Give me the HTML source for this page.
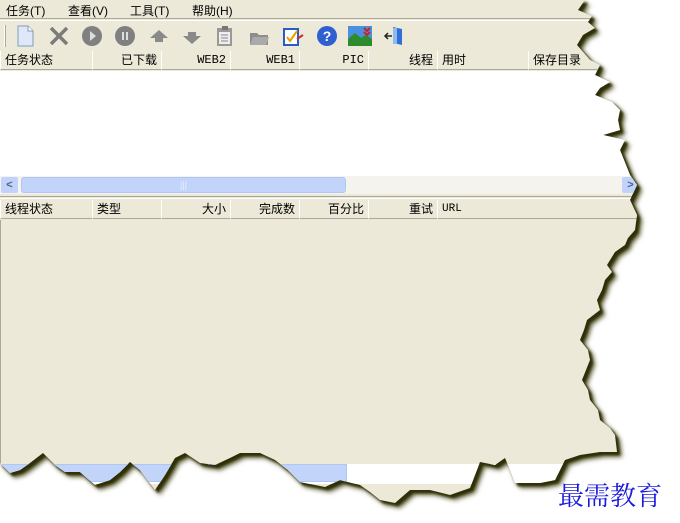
<!DOCTYPE html>
<html><head><meta charset="utf-8"><style>
*{margin:0;padding:0;box-sizing:border-box}
body{width:680px;height:523px;background:#fff;position:relative;overflow:hidden;font-family:"Liberation Sans","Noto Sans CJK SC","WenQuanYi Zen Hei",sans-serif;font-size:12px;color:#000}
#wrap{position:absolute;left:0;top:0;width:680px;height:523px;filter:drop-shadow(3px 3px 1px #2e2e08) drop-shadow(2px 2px 2px #55552a)}
#pg{position:absolute;left:0;top:0;width:680px;height:523px;background:#ece9d8;
clip-path:polygon(0 0,585px 0,578px 10px,592px 16px,588px 22px,595px 28px,583px 35px,577px 45px,590px 60px,600px 65px,595px 75px,610px 82px,600px 88px,595px 95px,612px 102px,620px 110px,618px 120px,620px 130px,603px 135px,625px 140px,620px 150px,624px 160px,630px 175px,637px 185px,630px 200px,637px 215px,635px 230px,628px 238px,625px 245px,615px 252px,607px 265px,612px 272px,605px 280px,602px 290px,597px 300px,600px 310px,587px 320px,584px 330px,580px 340px,588px 350px,590px 360px,582px 380px,588px 390px,590px 400px,598px 410px,600px 420px,610px 428px,615px 435px,617px 452px,600px 452px,580px 455px,565px 460px,560px 470px,555px 480px,540px 483px,515px 483px,510px 470px,505px 458px,495px 465px,480px 462px,475px 475px,470px 488px,450px 495px,430px 490px,410px 490px,395px 503px,380px 500px,370px 492px,360px 485px,340px 480px,325px 487px,300px 482px,288px 470px,275px 460px,260px 453px,240px 453px,230px 458px,215px 465px,200px 463px,185px 453px,175px 458px,165px 475px,155px 490px,140px 470px,130px 462px,120px 472px,110px 480px,95px 485px,80px 472px,65px 472px,55px 465px,43px 453px,30px 463px,20px 470px,10px 473px,0 463px)}
.menu{position:absolute;top:0;left:0;height:19px;width:680px;border-bottom:1px solid #aca899}
.menu span{position:absolute;top:2px;font-size:12px}
.tb{position:absolute;top:20px;left:0;width:680px;height:30px;border-top:1px solid #fff}
.ic{position:absolute;top:4px;width:22px;height:22px}
.hdr{position:absolute;left:0;width:680px;height:20px;background:#ece9d8}
.hdr div{position:absolute;top:0;height:19px;line-height:15px;border-right:1px solid #aca899;border-left:1px solid #fff;border-bottom:1px solid #aca899;padding:2px 4px;white-space:nowrap;font-size:12px}
.r{text-align:right}
.sb{position:absolute;left:0;width:680px;height:18px;background:#f4f3ee}
</style></head><body>
<div id="wrap"><div id="pg">
<div class="menu"><span style="left:6px">任务(T)</span><span style="left:68px">查看(V)</span><span style="left:130px">工具(T)</span><span style="left:192px">帮助(H)</span></div>
<div class="tb">
<div style="position:absolute;left:4px;top:4px;width:2px;height:22px;border-left:1px solid #fff;border-right:1px solid #aca899"></div>
<svg class="ic" style="left:14px" viewBox="0 0 22 22"><path d="M4 1h10l5 5v15H4z" fill="#dfe8f8" stroke="#7f9db9"/><path d="M14 1v5h5" fill="#fff" stroke="#7f9db9"/></svg>
<svg class="ic" style="left:48px" viewBox="0 0 22 22"><path d="M3 3l16 16M19 3L3 19" stroke="#7b7b7b" stroke-width="3.5"/></svg>
<svg class="ic" style="left:81px" viewBox="0 0 22 22"><circle cx="11" cy="11" r="10" fill="#808080"/><path d="M9 6l6 5-6 5z" fill="#ddd"/></svg>
<svg class="ic" style="left:114px" viewBox="0 0 22 22"><circle cx="11" cy="11" r="10" fill="#808080"/><rect x="8" y="7" width="2" height="8" fill="#ddd"/><rect x="12" y="7" width="2" height="8" fill="#ddd"/></svg>
<svg class="ic" style="left:148px" viewBox="0 0 22 22"><path d="M11 5l9 8h-5v4H7v-4H2z" fill="#8a8a8a"/></svg>
<svg class="ic" style="left:181px" viewBox="0 0 22 22"><path d="M11 19l9-8h-5V7H7v4H2z" fill="#8a8a8a"/></svg>
<svg class="ic" style="left:214px" viewBox="0 0 22 22"><rect x="3" y="3" width="15" height="18" fill="#999"/><rect x="5" y="7" width="11" height="12" fill="#eee"/><path d="M7 10h7M7 13h7M7 16h7" stroke="#888"/><rect x="8" y="1" width="6" height="4" fill="#777"/></svg>
<svg class="ic" style="left:248px" viewBox="0 0 22 22"><path d="M2 8h7l2 2h9v10H2z" fill="#8d8d8d"/><path d="M5 12h16l-3 8H2z" fill="#aaa"/></svg>
<svg class="ic" style="left:282px" viewBox="0 0 22 22"><rect x="2" y="4" width="14" height="16" fill="#fff" stroke="#2a5cc8" stroke-width="2"/><path d="M5 12l3 4 7-10" stroke="#e8a000" stroke-width="2" fill="none"/><path d="M15 14l6-4" stroke="#c03030" stroke-width="2"/></svg>
<svg class="ic" style="left:316px" viewBox="0 0 22 22"><circle cx="11" cy="11" r="10" fill="#2f5fd0"/><text x="11" y="16" font-size="14" font-weight="bold" text-anchor="middle" fill="#fff" font-family="Liberation Sans">?</text></svg>
<svg class="ic" style="left:348px;width:24px" viewBox="0 0 24 22"><rect x="0" y="1" width="24" height="20" fill="#4a90e0"/><path d="M0 14l7-6 6 5 5-3 6 4v7H0z" fill="#2d8a2d"/><path d="M16 3l3 3 3-3M16 7l3 3 3-3" stroke="#d02020" stroke-width="2" fill="none"/></svg>
<svg class="ic" style="left:383px" viewBox="0 0 22 22"><path d="M10 2l9 2v16l-9-2z" fill="#2f6fd8"/><rect x="10" y="3" width="4" height="16" fill="#8fbaf0"/><path d="M2 11h7M5 8l-3 3 3 3" stroke="#222" stroke-width="1.5" fill="none"/></svg>
</div>
<div class="hdr" style="top:51px"><div style="left:0;width:93px">任务状态</div><div class="r" style="left:92px;width:70px">已下载</div><div class="r" style="left:161px;width:70px;font-family:'Liberation Mono',monospace">WEB2</div><div class="r" style="left:230px;width:70px;font-family:'Liberation Mono',monospace">WEB1</div><div class="r" style="left:299px;width:70px;font-family:'Liberation Mono',monospace">PIC</div><div class="r" style="left:368px;width:70px">线程</div><div style="left:437px;width:92px">用时</div><div style="left:528px;width:152px">保存目录</div></div>
<div style="position:absolute;top:71px;left:0;width:680px;height:105px;background:#fff"></div>
<div class="sb" style="top:176px">
<div style="position:absolute;left:1px;top:1px;width:17px;height:16px;background:#c1d3fb;border-radius:2px;color:#4d6185;font-weight:bold;font-size:11px;text-align:center;line-height:16px">&lt;</div>
<div style="position:absolute;left:21px;top:1px;width:325px;height:16px;background:#c3d4fb;border:1px solid #b0c6f5;border-radius:3px;text-align:center;color:#eef;font-size:9px;line-height:14px">|||</div>
<div style="position:absolute;left:622px;top:1px;width:17px;height:16px;background:#c1d3fb;border-radius:2px;color:#4d6185;font-weight:bold;font-size:11px;text-align:center;line-height:16px">&gt;</div>
</div>
<div style="position:absolute;top:196px;left:0;width:680px;border-top:1px solid #aca899;border-bottom:1px solid #fff;height:3px"></div>
<div class="hdr" style="top:200px"><div style="left:0;width:93px">线程状态</div><div style="left:92px;width:70px">类型</div><div class="r" style="left:161px;width:70px">大小</div><div class="r" style="left:230px;width:70px">完成数</div><div class="r" style="left:299px;width:70px">百分比</div><div class="r" style="left:368px;width:70px">重试</div><div style="left:437px;width:243px;font-family:'Liberation Mono',monospace;font-size:11px">URL</div></div>
<div style="position:absolute;left:0;top:220px;width:2px;height:245px;border-left:1px solid #aca899"></div>
<div class="sb" style="top:464px;height:20px;background:#fff"><div style="position:absolute;left:0;top:0;width:347px;height:18px;background:#c3d4fb;border:1px solid #b0c6f5"></div></div>
</div></div>
<div style="position:absolute;left:558px;top:476px;font-family:'Noto Serif CJK SC','Liberation Serif',serif;font-size:26px;color:#1a1adf">最需教育</div>
</body></html>
